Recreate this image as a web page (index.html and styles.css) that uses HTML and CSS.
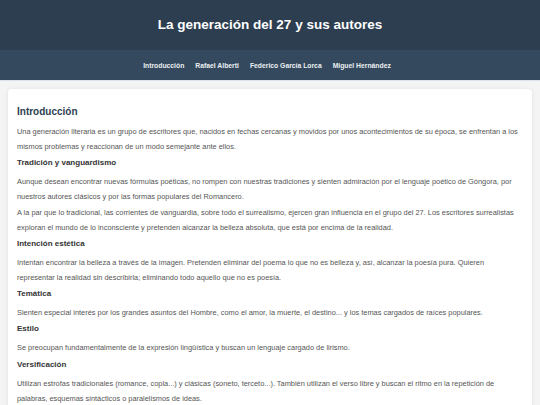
FILE: index.html
```html
<!DOCTYPE html>
<html lang="es">
<head>
<meta charset="utf-8">
<title>La generación del 27 y sus autores</title>
<link rel="stylesheet" href="styles.css">
</head>
<body>
<header class="site-header">
  <h1 class="site-title">La generación del 27 y sus autores</h1>
</header>
<nav class="site-nav">
  <a class="nav-link" href="#intro">Introducción</a>
  <a class="nav-link" href="#alberti">Rafael Alberti</a>
  <a class="nav-link" href="#lorca">Federico García Lorca</a>
  <a class="nav-link" href="#hernandez">Miguel Hernández</a>
</nav>
<main class="main">
  <section class="card" id="intro">
    <h2 class="card-title">Introducción</h2>
    <p class="text">Una generación literaria es un grupo de escritores que, nacidos en fechas cercanas y movidos por unos acontecimientos de su época, se enfrentan a los mismos problemas y reaccionan de un modo semejante ante ellos.</p>
    <h3 class="subtitle">Tradición y vanguardismo</h3>
    <p class="text">Aunque desean encontrar nuevas fórmulas poéticas, no rompen con nuestras tradiciones y sienten admiración por el lenguaje poético de Góngora, por nuestros autores clásicos y por las formas populares del Romancero.</p>
    <p class="text">A la par que lo tradicional, las corrientes de vanguardia, sobre todo el surrealismo, ejercen gran influencia en el grupo del 27. Los escritores surrealistas exploran el mundo de lo inconsciente y pretenden alcanzar la belleza absoluta, que está por encima de la realidad.</p>
    <h3 class="subtitle">Intención estética</h3>
    <p class="text">Intentan encontrar la belleza a través de la imagen. Pretenden eliminar del poema lo que no es belleza y, así, alcanzar la poesía pura. Quieren representar la realidad sin describirla; eliminando todo aquello que no es poesía.</p>
    <h3 class="subtitle">Temática</h3>
    <p class="text">Sienten especial interés por los grandes asuntos del Hombre, como el amor, la muerte, el destino... y los temas cargados de raíces populares.</p>
    <h3 class="subtitle">Estilo</h3>
    <p class="text">Se preocupan fundamentalmente de la expresión lingüística y buscan un lenguaje cargado de lirismo.</p>
    <h3 class="subtitle">Versificación</h3>
    <p class="text">Utilizan estrofas tradicionales (romance, copla...) y clásicas (soneto, terceto...). También utilizan el verso libre y buscan el ritmo en la repetición de palabras, esquemas sintácticos o paralelismos de ideas.</p>
  </section>
</main>
</body>
</html>
```

FILE: styles.css
```css
* { box-sizing: border-box; }

html, body {
  margin: 0;
  padding: 0;
  background: #f4f4f4;
  font-family: "Liberation Sans", Arial, sans-serif;
}

.site-header {
  height: 50px;
  background: #2c3e50;
  display: flex;
  align-items: center;
  justify-content: center;
}

.site-title {
  margin: 0;
  color: #ffffff;
  font-size: 13.5px;
  font-weight: bold;
  line-height: 1;
}

.site-nav {
  height: 31px;
  background: #34495e;
  border-bottom: 1px solid #dde3ea;
  display: flex;
  align-items: center;
  justify-content: center;
  gap: 11px;
  padding-right: 6px;
}

.nav-link {
  color: #ecf0f1;
  text-decoration: none;
  font-size: 6.8px;
  font-weight: bold;
}

.main {
  padding: 8px 8px 0;
}

.card {
  background: #ffffff;
  border-radius: 4px;
  box-shadow: 0 0 4px rgba(0, 0, 0, 0.08);
  padding: 9px 9px 12px;
}

.card-title {
  margin: 6.5px 0 5px;
  font-size: 10px;
  line-height: 14px;
  font-weight: bold;
  color: #2c3e50;
}

.subtitle {
  margin: 0 0 4px;
  font-size: 8px;
  line-height: 15px;
  font-weight: bold;
  color: #333333;
}

.text {
  margin: 0 0 1.2px;
  font-size: 7.4px;
  line-height: 15px;
  color: #555555;
}
```
